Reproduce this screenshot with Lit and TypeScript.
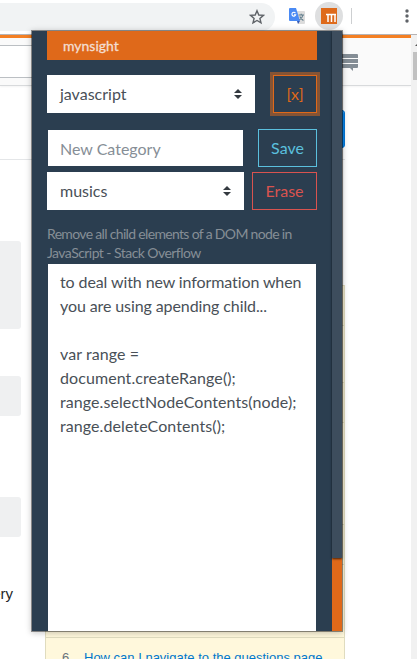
import { LitElement, html, css, svg } from "lit";
import { customElement } from "lit/decorators.js";

const caret = svg`<svg class="caret" viewBox="0 0 8 10" width="8" height="10"><path d="M4 0 8 4H0zM0 6h8L4 10z" fill="#343a40"/></svg>`;

@customElement("browser-bar")
class BrowserBar extends LitElement {
  static styles = css`
    :host { display: flex; align-items: center; height: 32px; padding-bottom: 2px; background: #fff; border-bottom: 1px solid #b6b4b6; font-family: "Liberation Sans", sans-serif; }
    .omnibox { width: 275px; height: 28px; margin-top: 2px; box-sizing: border-box; border-radius: 0 14px 14px 0; background: #f1f3f4; display: flex; align-items: center; justify-content: flex-end; padding-right: 10px; }
    .translate { margin-left: 14px; display: block; }
    .badge { margin-left: 10px; width: 28px; height: 28px; border-radius: 14px; background: #dedfe0; display: flex; align-items: center; justify-content: center; }
    .divider { width: 1px; height: 16px; margin-left: 8px; background: #cdcfd1; }
    .dots { margin-left: 53px; display: block; }
    svg { display: block; }
  `;
  render() {
    return html`
      <div class="omnibox">
        <svg width="16" height="16" viewBox="0 0 16 16"><path d="M8 1.7 9.8 6l4.6.4-3.5 3 1.1 4.5L8 11.500l-4 2.400 1.100-4.500-3.500-3L6.200 6z" fill="none" stroke="#5f6368" stroke-width="1.400"/></svg>
      </div>
      <svg class="translate" width="16" height="16" viewBox="0 0 16 16">
        <path d="M6 3h9a1 1 0 0 1 1 1v11a1 1 0 0 1-1 1H9z" fill="#dcdcdc"/>
        <path d="M9.500 7h5.500M12.200 5.700V7M14 7c-.5 2.300-2 4-3.800 5M10.800 8.500c.7 1.700 2 3 3.600 4" stroke="#607d8b" stroke-width="1.100" fill="none"/>
        <path d="M1 0h6l4 13H1a1 1 0 0 1-1-1V1a1 1 0 0 1 1-1z" fill="#4a8af4"/>
        <path d="M8 13h3l-2 3z" fill="#3158b8"/>
        <path d="M6.400 5.100A1.900 1.900 0 1 0 6.700 6.700H5" fill="none" stroke="#fff" stroke-width="1.100"/>
      </svg>
      <div class="badge">
        <svg width="16" height="16" viewBox="0 0 16 16"><path fill="#de6a1b" d="M0 0h16v16H0z"/><path d="M5 6.500h10M7 6.500V14M10.500 7v7M14 7v7" fill="none" stroke="#fff" stroke-width="1.500"/></svg>
      </div>
      <div class="divider"></div>
      <svg class="dots" width="4" height="14" viewBox="0 0 4 14"><g fill="#5f6368"><circle cx="2" cy="2" r="1.700"/><circle cx="2" cy="7" r="1.700"/><circle cx="2" cy="12" r="1.700"/></g></svg>
    `;
  }
}

@customElement("question-page")
class QuestionPage extends LitElement {
  static styles = css`
    :host { display: flex; height: 624px; overflow: hidden; background: #fff; font-family: "Liberation Sans", sans-serif; }
    .page { width: 411px; display: flex; flex-direction: column; }
    .top { height: 51px; flex: none; box-sizing: border-box; border-top: 3px solid #f48024; border-bottom: 1px solid #d8dadc; background: #fafafa; display: flex; padding-top: 7px; box-shadow: 0 1px 2px #0000000c; }
    .search { width: 300px; height: 33px; box-sizing: border-box; border: 1px solid #bbbfc3; border-left: 0; background: #fff; }
    .chat { margin: 9px 0 0 41px; }
    .ask { height: 74px; flex: none; width: 345px; box-sizing: border-box; padding-top: 24px; border-bottom: 1px solid #e4e6e8; display: flex; justify-content: flex-end; }
    .ask-button { width: 90px; height: 38px; box-sizing: border-box; border: 1px solid #0077d8; box-shadow: inset 0 1px #49adff; border-radius: 3px; background: #0a8cf5; }
    .columns { display: flex; gap: 24px; }
    .answer { width: 21px; padding-top: 81px; }
    .code { height: 40px; border-radius: 0 3px 3px 0; background: #eff0f1; }
    .tall { height: 88px; margin-bottom: 47px; }
    .gap { margin-bottom: 81px; }
    .word { margin-top: 48px; font-size: 15px; line-height: 18px; color: #242729; display: flex; justify-content: flex-end; width: 13px; white-space: nowrap; }
    .side { width: 300px; box-sizing: border-box; margin-top: 125px; border: 1px solid #e0dcbf; background: #fff8dc; }
    .head { height: 39px; background: #fbf3d5; border-bottom: 1px solid #e0dcbf; }
    .body { height: 56px; border-bottom: 1px solid #e0dcbf; }
    .long { height: 101px; }
    .last { height: 72px; }
    .link { display: flex; padding: 12px 0 0 16px; font-size: 13px; line-height: 16px; color: #0077cc; white-space: nowrap; }
    .score { width: 22px; color: #6a737c; }
    .track { width: 6px; background: #f1f1f1; }
    .arrow { display: block; margin: 9px 0 0 4px; }
    .thumb { width: 4px; height: 28px; margin: 6px 0 0 2px; background: #c1c1c1; }
  `;
  render() {
    return html`
      <div class="page">
        <div class="top">
          <div class="search"></div>
          <svg class="chat" width="17" height="17" viewBox="0 0 17 17"><path fill="#848d95" d="M0 0h16q1 0 1 1v3H0zM0 5h17v4H0zM0 10h17v3q0 1-1 1h-4v3l-3-3H0z"/></svg>
        </div>
        <div class="ask"><div class="ask-button"></div></div>
        <div class="columns">
          <div class="answer">
            <div class="code tall"></div>
            <div class="code gap"></div>
            <div class="code"></div>
            <div class="word">ery</div>
          </div>
          <div class="side">
            <div class="head"></div><div class="body"></div>
            <div class="head"></div><div class="body long"></div>
            <div class="head"></div><div class="body last"></div>
            <div class="link"><span class="score">6</span><span>How can I navigate to the questions page</span></div>
          </div>
        </div>
      </div>
      <div class="track">
        <svg class="arrow" width="2" height="2" viewBox="0 0 2 2"><path d="M2 0v2H0z" fill="#505050"/></svg>
        <div class="thumb"></div>
      </div>
    `;
  }
}

@customElement("insight-popup")
class InsightPopup extends LitElement {
  static styles = css`
    :host { display: flex; width: 310px; height: 600px; background: #2b3e50; font: 16px/24px Lato, sans-serif; color: #495057; box-shadow: 0 0 0 1px #00000066, 0 1px 6px 1px #00000038; font-variant-ligatures: none; }
    .panel { width: 270px; padding: 0 15px; display: flex; flex-direction: column; }
    .brand { height: 29px; line-height: 30px; padding-left: 16px; background: #df691a; color: #f3ded1; font-size: 14px; -webkit-text-stroke: 0.3px #f3ded1; }
    .row { display: flex; justify-content: space-between; align-items: center; height: 38px; }
    .first { margin: 15px 0 16px; }
    .third { margin-top: 5px; }
    .select { box-sizing: border-box; width: 208px; height: 38px; padding: 0 13px; background: #fff; display: flex; align-items: center; justify-content: space-between; }
    .narrow { width: 197px; }
    .input { box-sizing: border-box; width: 195px; height: 36px; margin-left: 1px; line-height: 38px; padding-left: 12px; background: #fff; color: #868e96; }
    .button { box-sizing: border-box; height: 38px; border: 1px solid; line-height: 35px; text-align: center; }
    .close { width: 44px; color: #df691a; box-shadow: 0 0 0 3px #df691a80; }
    .save { width: 59px; color: #5bc0de; }
    .erase { width: 65px; color: #d9534f; }
    .caption { margin-top: 14px; font-size: 14px; line-height: 19px; color: #868e96; white-space: nowrap; letter-spacing: -0.67px; }
    .site { letter-spacing: -0.55px; }
    .note { flex: 1; margin: 2px 1px 0; padding: 6px 0 0 12px; background: #fff; white-space: pre; }
    .prose { letter-spacing: -0.1px; }
    .code { letter-spacing: 0.08px; }
    .rail { width: 10px; background: #df691a; }
    .handle { height: 527px; background: #3d4d5d; box-shadow: 0 1px 2px #000000b0; }
  `;
  render() {
    const prose = "to deal with new information when\nyou are using apending child...";
    const code = "var range =\ndocument.createRange();\nrange.selectNodeContents(node);\nrange.deleteContents();";
    return html`
      <div class="panel">
        <div class="brand">mynsight</div>
        <div class="row first">
          <div class="select"><span>javascript</span>${caret}</div>
          <div class="button close">[x]</div>
        </div>
        <div class="row"><div class="input">New Category</div><div class="button save">Save</div></div>
        <div class="row third">
          <div class="select narrow"><span>musics</span>${caret}</div>
          <div class="button erase">Erase</div>
        </div>
        <div class="caption">Remove all child elements of a DOM node in<br /><span class="site">JavaScript - Stack Overflow</span></div>
        <div class="note"><span class="prose">${prose}</span>${"\n\n"}<span class="code">${code}</span></div>
      </div>
      <div class="rail"><div class="handle"></div></div>
    `;
  }
}

@customElement("app-root")
class AppRoot extends LitElement {
  static styles = css`
    :host { display: block; position: relative; width: 417px; height: 659px; overflow: hidden; background: #fff; }
    .popup { position: absolute; left: 32px; top: 31px; }
  `;
  render() {
    return html`<browser-bar></browser-bar><question-page></question-page><insight-popup class="popup"></insight-popup>`;
  }
}
